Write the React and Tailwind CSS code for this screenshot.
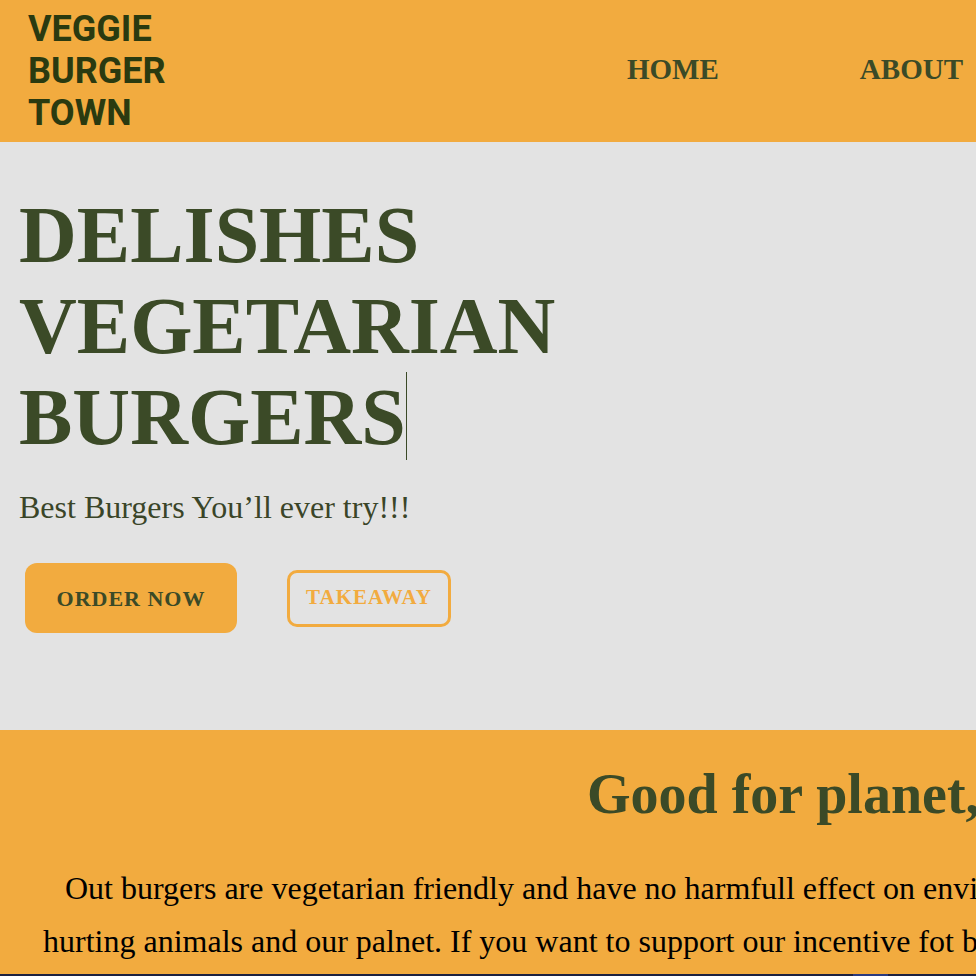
export default function App() {
  const serif = { fontFamily: '"Liberation Serif", "Times New Roman", serif' };
  return (
    <div className="w-[976px] overflow-hidden">
      <div className="w-[1600px]">
        <header className="flex h-[142px] bg-[#f2ab3f]">
          <div
            className="w-[627px] pl-[28px] py-2 text-[36px] leading-[42px] font-bold text-[#2a3a10]"
            style={{ fontFamily: 'Roboto, "Liberation Sans", sans-serif' }}
          >
            <div>VEGGIE</div>
            <div>BURGER</div>
            <div>TOWN</div>
          </div>
          <nav className="flex gap-[141px] pt-[48px] text-[29px] font-bold text-[#3b4a27]" style={serif}>
            <a>HOME</a>
            <a>ABOUT</a>
            <a>MENU</a>
            <a>CONTACT</a>
          </nav>
        </header>

        <section className="h-[588px] bg-[#e3e3e3] px-[19px] pt-[48px]" style={serif}>
          <h1 className="text-[80px] leading-[91px] font-bold text-[#3b4a27]">
            DELISHES
            <br />
            VEGETARIAN
            <br />
            BURGERS
            <span className="inline-block w-px h-[88px] bg-[#3b4a27] align-top"></span>
          </h1>
          <p className="mt-[20px] text-[32px] text-[#3a4528]">Best Burgers You’ll ever try!!!</p>
          <div className="mt-[32px] ml-[6px] flex items-center">
            <button className="flex w-[212px] h-[70px] items-center justify-center rounded-[12px] bg-[#f2ab3f] text-[22px] font-bold tracking-[1px] text-[#3b4a27]">
              ORDER NOW
            </button>
            <button className="ml-[50px] flex w-[164px] h-[57px] items-center justify-center rounded-[10px] border-[3px] border-[#f2ab3f] text-[21px] font-bold tracking-[1px] text-[#f2ab3f]">
              TAKEAWAY
            </button>
          </div>
        </section>

        <section className="h-[244px] bg-[#f2ab3f] pt-[32px]" style={serif}>
          <h2 className="pl-[587px] whitespace-nowrap text-[56px] leading-[64px] font-bold text-[#3b4a27]">
            Good for planet, good for you
          </h2>
          <p className="mt-[36px] pl-[43px] whitespace-nowrap text-[32px] leading-[53px] text-black">
            <span className="pl-[22px]">
              Out burgers are vegetarian friendly and have no harmfull effect on environment, without
            </span>
            <br />
            hurting animals and our palnet. If you want to support our incentive fot better future, visit us.
          </p>
        </section>

        <section className="relative h-[200px] bg-[#1d2140]">
          <div className="absolute left-[853px] top-0 h-[40px] w-[35px] bg-[#2a3a80]"></div>
        </section>
      </div>
    </div>
  );
}
